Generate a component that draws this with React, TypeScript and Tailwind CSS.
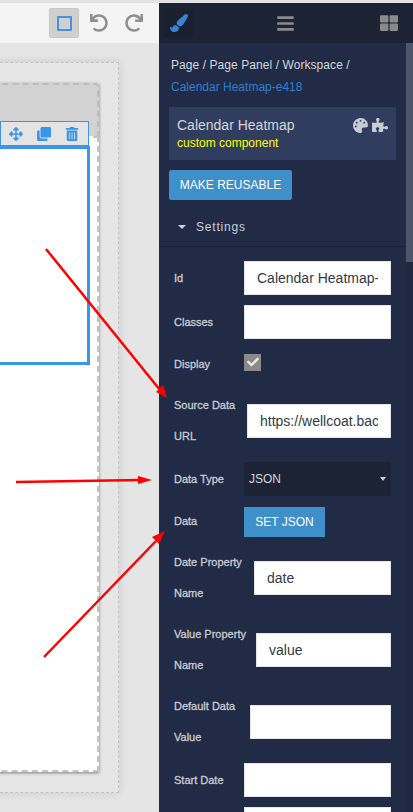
import { FaBars, FaClone, FaPaintBrush, FaPalette, FaPuzzlePiece, FaRedo, FaThLarge, FaTrashAlt, FaUndo, FaArrowsAlt, FaCheck } from 'react-icons/fa';

const labelClass = 'text-[11px] leading-[31px] text-[#c9ccd3] [-webkit-text-stroke:0.3px]';

function TextRow({ label, value, width }: { label: string[]; value?: string; width: string }) {
  return (
    <div className="flex items-center">
      <div className={labelClass}>
        {label.map((l) => (
          <div key={l}>{l}</div>
        ))}
      </div>
      <input
        readOnly
        value={value ?? ''}
        className={`${width} ml-auto h-[34px] shrink-0 border border-[#e2e5ec] bg-white px-[12px] text-[14px] text-[#333a45] outline-none`}
      />
    </div>
  );
}

function Arrows() {
  return (
    <svg className="absolute left-0 top-0 pointer-events-none" width="413" height="812" viewBox="0 0 413 812">
      <g stroke="#f00" strokeWidth="2.5" fill="#f00">
        <line x1="46" y1="249" x2="160" y2="390" />
        <polygon points="167,398 156,392 163,385" stroke="none" />
        <line x1="16" y1="482" x2="140" y2="480" />
        <polygon points="152,480 138,476 138,484" stroke="none" />
        <line x1="44" y1="657" x2="156" y2="541" />
        <polygon points="165,531 152,537 159,544" stroke="none" />
      </g>
    </svg>
  );
}

export default function App() {
  return (
    <div className="relative flex h-[812px] w-[413px] flex-col overflow-hidden bg-[#e5e5e5] font-['Liberation_Sans',Arial,sans-serif]">
      <div className="h-[3px] shrink-0 bg-[#e2e2e2]" />
      <div className="flex min-h-0 flex-1">
        {/* Canvas side */}
        <div className="relative w-[159px] shrink-0 overflow-hidden">
          <div className="flex h-[40px] items-center justify-end gap-[17px] bg-[#f4f4f4] pr-[16px]">
            <div className="mr-[-6px] flex h-[30px] w-[30px] items-center justify-center rounded-[2px] border border-[#c8c8c8] bg-[#d0d0d0]">
              <div className="h-[15px] w-[15px] rounded-[1px] border-2 border-[#4a90e2]" />
            </div>
            <FaUndo className="text-[18px] text-[#8f8f8f]" />
            <FaRedo className="text-[18px] text-[#8f8f8f]" />
          </div>

          <div className="ml-[-20px] mt-[19px] h-[731px] w-[139px] border border-dashed border-[#c4c4c4] bg-[#e6e6e6] py-[20px] pr-[19px] shadow-[0_0_8px_rgba(0,0,0,0.12)]">
            <div className="flex h-full flex-col shadow-[0_1px_3px_rgba(0,0,0,0.45)]">
              <div className="h-[53px] rounded-tr-[3px] border-2 border-b-0 border-dashed border-[#bdbdbd] bg-[#d2d2d2]" />
              <div className="flex-1 border-2 border-dashed border-[#c4c4c4] bg-white" />
            </div>
          </div>

          {/* Selected element overlay */}
          <div className="absolute left-0 top-[118px] flex h-[25px] w-[89px] items-center justify-end gap-[14px] border border-[#3b95e8] bg-[#e4e4e4] pr-[9px] text-[#3b95e8]">
            <FaArrowsAlt className="text-[14px]" />
            <FaClone className="text-[14px]" />
            <FaTrashAlt className="text-[14px]" />
          </div>
          <div className="absolute left-[-4px] top-[143px] h-[219px] w-[94px] border-[3px] border-[#3b95e8] bg-white" />
        </div>

        {/* Settings panel */}
        <div className="flex min-w-0 flex-1 flex-col bg-[#212b45]">
          <div className="flex h-[40px] shrink-0 items-center bg-[#1c2335] pl-[5px] pr-[15px]">
            <div className="flex h-[30px] w-[30px] items-center justify-center bg-[#1a202e]">
              <FaPaintBrush className="text-[18px] text-[#3b82d6]" />
            </div>
            <FaBars className="ml-[82px] text-[19px] text-[#8a8a8a]" />
            <FaThLarge className="ml-auto text-[18px] text-[#8a8a8a]" />
          </div>

          <div className="flex min-h-0 flex-1">
            <div className="min-w-0 flex-1">
              <div className="px-[10px] pt-[11px]">
                <div className="pl-[2px] text-[12px] leading-[22px] tracking-[0.07px] text-[#d4d6db]">Page / Page Panel / Workspace /</div>
                <div className="pl-[2px] text-[12px] leading-[22px] text-[#2e7fd3]">Calendar Heatmap-e418</div>

                <div className="mt-[9px] flex h-[53px] justify-between bg-[#313d5e] pl-[8px] pr-[8px] pt-[9px]">
                  <div>
                    <div className="text-[14px] leading-[18px] text-[#d4d6db]">Calendar Heatmap</div>
                    <div className="text-[12px] leading-[18px] text-[#ffff00]">custom component</div>
                  </div>
                  <div className="flex h-[18px] items-center gap-[4px] text-[#c9ccd3]">
                    <FaPalette className="text-[15px]" />
                    <FaPuzzlePiece className="text-[16px]" />
                  </div>
                </div>

                <button className="mt-[10px] h-[30px] w-[123px] rounded-[2px] bg-[#3f8fc9] text-[12px] text-white">
                  MAKE REUSABLE
                </button>

                <div className="mt-[17px] flex h-[20px] items-center gap-[10px] pl-[9px] text-[12px] tracking-[0.8px] text-[#c9ccd3]">
                  <span className="h-0 w-0 border-x-[4px] border-t-[4px] border-x-transparent border-t-[#d4d6db]" />
                  Settings
                </div>
              </div>

              <div className="mt-[9px] border-t border-[#1c2335] px-[15px] pt-[14px]">
                <div className="flex flex-col gap-[10px]">
                  <TextRow label={['Id']} value="Calendar Heatmap-" width="w-[147px]" />
                  <TextRow label={['Classes']} width="w-[147px]" />

                  <div className="flex items-center justify-between">
                    <div className={labelClass}>Display</div>
                    <div className="mb-[5px] flex w-[147px]">
                      <div className="flex h-[17px] w-[17px] items-center justify-center bg-[#8a8a8a] text-[#e8e8e8]">
                        <FaCheck className="text-[12px]" />
                      </div>
                    </div>
                  </div>

                  <TextRow label={['Source Data', 'URL']} value="https://wellcoat.backend.io/data" width="w-[144px]" />

                  <div className="flex items-center justify-between">
                    <div className={labelClass}>Data Type</div>
                    <div className="flex h-[34px] w-[147px] items-center justify-between bg-[#1c2335] pl-[5px] pr-[5px] text-[12px] text-[#d4d6db]">
                      JSON
                      <span className="h-0 w-0 border-x-[3.5px] border-t-[4px] border-x-transparent border-t-[#c9ccd3]" />
                    </div>
                  </div>

                  <div className="flex h-[31px] items-center justify-between">
                    <div className={labelClass}>Data</div>
                    <div className="flex w-[147px]">
                      <button className="mt-[1px] h-[30px] w-[81px] bg-[#3f8fc9] text-[12px] text-white">SET JSON</button>
                    </div>
                  </div>

                  <TextRow label={['Date Property', 'Name']} value="date" width="w-[137px]" />
                  <TextRow label={['Value Property', 'Name']} value="value" width="w-[135px]" />
                  <TextRow label={['Default Data', 'Value']} width="w-[141px]" />
                  <TextRow label={['Start Date']} width="w-[147px]" />
                  <TextRow label={[]} width="w-[147px]" />
                </div>
              </div>
            </div>

            {/* Scrollbar */}
            <div className="w-[7px] shrink-0 bg-[#1f2840]">
              <div className="h-[219px] bg-[#4d5568]" />
            </div>
          </div>
        </div>
      </div>
      <Arrows />
    </div>
  );
}
